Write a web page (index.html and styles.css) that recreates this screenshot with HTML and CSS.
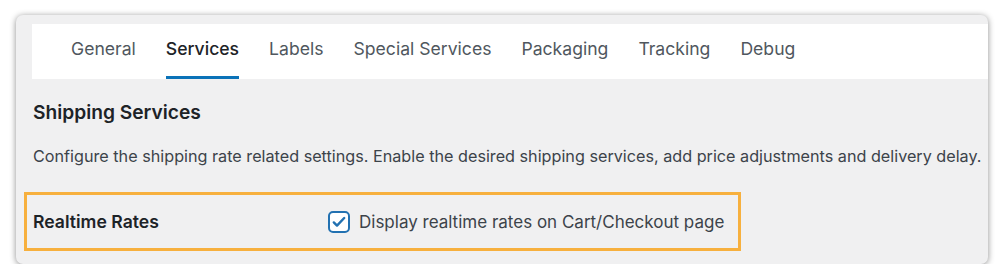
FILE: index.html
```html
<!DOCTYPE html>
<html lang="en">
<head>
    <meta charset="UTF-8">
    <title>Shipping Services</title>
    <link rel="stylesheet" href="styles.css">
</head>
<body>
    <div class="window">
        <nav class="tabs">
            <a class="tab">General</a>
            <a class="tab active">Services</a>
            <a class="tab">Labels</a>
            <a class="tab">Special Services</a>
            <a class="tab">Packaging</a>
            <a class="tab">Tracking</a>
            <a class="tab">Debug</a>
        </nav>
        <div class="content">
            <h2 class="title">Shipping Services</h2>
            <p class="desc">Configure the shipping rate related settings. Enable the desired shipping services, add price adjustments and delivery delay.</p>
            <div class="row highlight">
                <div class="row-label">Realtime Rates</div>
                <label class="check">
                    <span class="box">
                        <svg viewBox="0 0 20 20" width="16" height="16"><path d="M3.5 10.5l4 4 9-9.5" fill="none" stroke="#2271b1" stroke-width="3" stroke-linecap="round" stroke-linejoin="round"/></svg>
                    </span>
                    Display realtime rates on Cart/Checkout page
                </label>
            </div>
        </div>
    </div>
</body>
</html>
```

FILE: styles.css
```css
* {
    margin: 0;
    padding: 0;
    box-sizing: border-box;
}

body {
    background: #fff;
    font-family: Inter, "Noto Sans", sans-serif;
    color: #1d2327;
}

.window {
    margin: 15px 0 0 16px;
    width: 972px;
    height: 249px;
    background: #f0f0f1;
    border-radius: 7px;
    box-shadow: 0 1px 6px rgba(0, 0, 0, 0.45);
    padding: 9px 0 0 16px;
    overflow: hidden;
}

.tabs {
    display: flex;
    height: 55px;
    background: #fff;
    padding-left: 39px;
    gap: 30px;
}

.tab {
    display: flex;
    align-items: center;
    font-size: 17.6px;
    color: #50575e;
    border-bottom: 3px solid transparent;
    padding-bottom: 4px;
}

.tab.active {
    color: #1d2327;
    font-weight: 500;
    border-bottom-color: #0a72b8;
}

.content {
    padding: 21px 0 0 1px;
}

.title {
    font-size: 19.2px;
    font-weight: 600;
    color: #1d2327;
    line-height: 24px;
}

.desc {
    margin-top: 22px;
    font-size: 16.2px;
    color: #3c434a;
    line-height: 20px;
    white-space: nowrap;
}

.highlight {
    margin: 26px 0 0 -9px;
    width: 717px;
    height: 59px;
    border: 3px solid #f7b03e;
    display: flex;
    align-items: center;
    padding-left: 6px;
}

.row-label {
    width: 295px;
    font-size: 17.6px;
    font-weight: 600;
    color: #1d2327;
}

.check {
    display: flex;
    align-items: center;
    gap: 9px;
    font-size: 17px;
    color: #3c434a;
}

.box {
    width: 22px;
    height: 22px;
    border: 2.5px solid #2271b1;
    border-radius: 5px;
    background: #fff;
    display: flex;
    align-items: center;
    justify-content: center;
}
```
